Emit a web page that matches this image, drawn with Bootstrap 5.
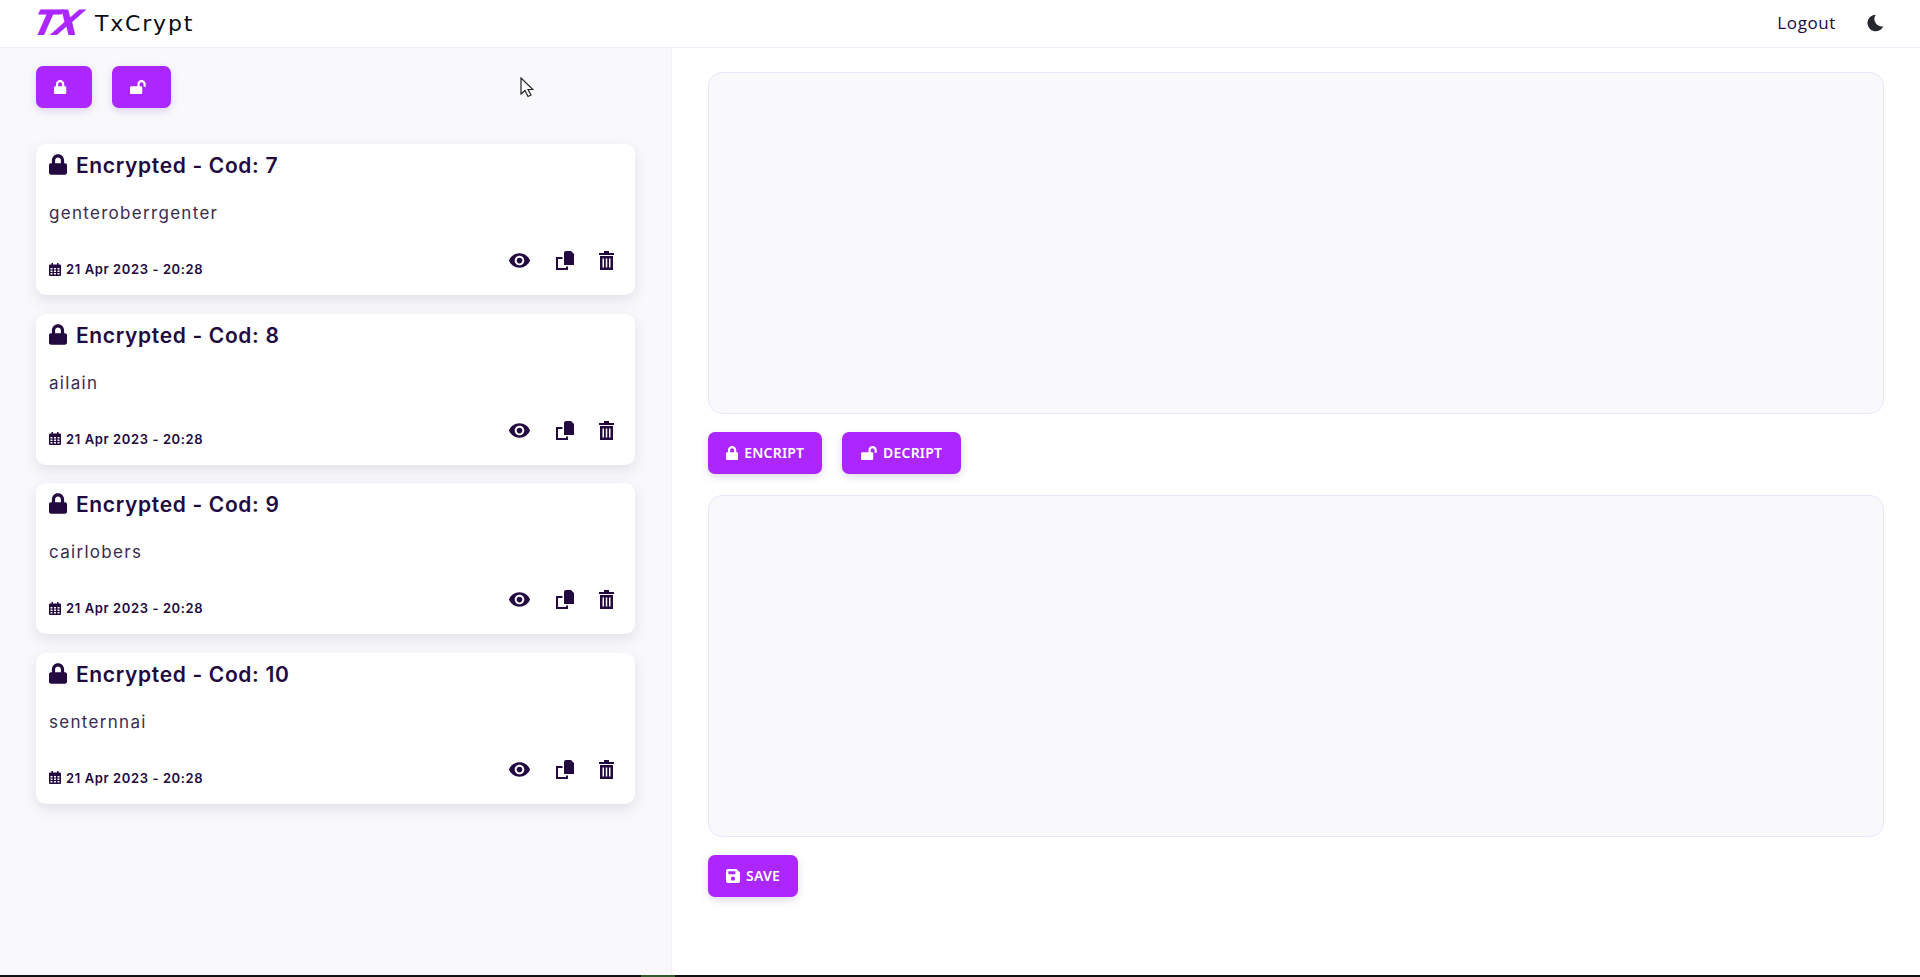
<!DOCTYPE html>
<html lang="en">
<head>
    <meta charset="UTF-8">
    <meta name="viewport" content="width=device-width, initial-scale=1.0">
    <title>TxCrypt</title>
    <link rel="stylesheet" href="https://cdn.jsdelivr.net/npm/bootstrap@5.3.0/dist/css/bootstrap.min.css">
    <style>
        body { height: 977px; overflow: hidden; background: #fff; color: #22093f; font-family: "Inter", "Liberation Sans", sans-serif; }
        .top-bar { height: 48px; padding: 0 36px; background: #fff; border-bottom: 1px solid #f5edfc; }
        .brand-mark { width: 49px; margin-left: -2px; color: #ab26ff; font: italic 700 35px/1 "DejaVu Sans", sans-serif; letter-spacing: -3.5px; transform: skewX(-14deg); }
        .brand-name { margin-left: 12px; color: #0b0b12; font: 400 22px/1 "DejaVu Sans", sans-serif; letter-spacing: 1.8px; }
        .logout-link { color: #22093f; font: 400 17px/1 "Open Sans", sans-serif; letter-spacing: .6px; margin: -3px 30px 0 0; text-decoration: none; }
        .moon-icon { width: 18px; height: 18px; fill: #26262e; margin-top: -2px; }
        .page-body { height: 927px; }
        .side-panel { width: 672px; padding: 18px 36px; background: #f9f9fc; border-right: 1px solid #f3f3f6; }
        .side-tools { margin-bottom: 36px; }
        .main-panel { padding: 24px 36px 0; }
        .btn-tx { display: inline-flex; align-items: center; justify-content: center; gap: 6px; height: 42px; padding: 0 18px; background: #ab26ff; color: #fff; border: 0; border-radius: 7px; font: 600 14px/1 "Noto Sans", sans-serif; letter-spacing: .2px; box-shadow: 0 3px 8px rgba(100, 60, 150, .2); }
        .btn-tx:hover { background: #9d1bf0; color: #fff; }
        .btn-tx svg { fill: #fff; height: 14px; width: auto; }
        .btn-square { width: 56px; padding: 0 7px 0 0; }
        .btn-wide { width: 59px; padding: 0 7px 0 0; }
        .btn-decript { width: 119px; padding: 0; }
        .entry-card { height: 151px; margin-bottom: 18.5px; padding: 8px 13px 0; border: 0; border-radius: 10px; box-shadow: 0 5px 14px rgba(60, 40, 90, .12); }
        .entry-title { margin: 0; font: 600 21px/28px "Inter", sans-serif; letter-spacing: .65px; color: #22093f; }
        .entry-title svg { width: 18px; height: 21px; margin: -5px 9px 0 0; fill: #22093f; vertical-align: middle; }
        .entry-text { margin: 22px 0 0; font: 400 17px/22px "Inter", sans-serif; letter-spacing: 1.3px; color: #3a2a50; }
        .entry-foot { margin-top: 21px; }
        .entry-date { font: 600 13px/1 "Inter", sans-serif; letter-spacing: .6px; margin-top: 18px; }
        .entry-date svg { width: 12px; height: 13px; fill: #22093f; margin: -2px 5px 0 0; vertical-align: middle; }
        .entry-actions { gap: 25px; margin-right: 8px; align-items: center; }
        .entry-actions svg { fill: #22093f; }
        .icon-eye { width: 23px; height: 23px; }
        .icon-copy { width: 18px; height: 19px; }
        .icon-trash { width: 15px; height: 19px; }
        .text-box { height: 342px; resize: none; background: #f9f9fb; border: 1px solid #efe4fa; border-radius: 14px; }
        .text-box:focus { background: #f9f9fb; border-color: #efe4fa; box-shadow: none; }
        .form-buttons { margin: 18px 0 21px; }
        .save-button { margin-top: 18px; }
        .cursor-mark { position: absolute; left: 520px; top: 77px; width: 14px; height: 21px; }
        .task-strip { position: absolute; left: 0; right: 0; bottom: 0; height: 2px; background: #111; }
        .task-item { position: absolute; left: 641px; width: 34px; height: 2px; background: #35592f; }
    </style>
</head>
<body class="position-relative">
    <!-- Top bar -->
    <nav class="top-bar d-flex align-items-center">
        <span class="brand-mark">TX</span>
        <span class="brand-name">TxCrypt</span>
        <div class="ms-auto d-flex align-items-center">
            <a class="logout-link" href="#">Logout</a>
            <svg class="moon-icon" viewBox="0 0 24 24"><path d="M13 1a11 11 0 1 0 10 15.5A10 10 0 0 1 13 1z"/></svg>
        </div>
    </nav>

    <div class="page-body d-flex">
        <!-- Saved items -->
        <div class="side-panel">
            <div class="side-tools d-flex gap-3">
                <button class="btn-tx btn-square"><svg viewBox="0 0 448 512"><path d="M400 224h-24v-72C376 68.2 307.8 0 224 0S72 68.2 72 152v72H48c-26.5 0-48 21.5-48 48v192c0 26.5 21.5 48 48 48h352c26.5 0 48-21.5 48-48V272c0-26.5-21.5-48-48-48zm-104 0H152v-72c0-39.7 32.3-72 72-72s72 32.3 72 72v72z"/></svg></button>
                <button class="btn-tx btn-wide ms-1"><svg viewBox="0 0 576 512"><path d="M423.5 0C339.5.3 272 69.5 272 153.5V224H48c-26.5 0-48 21.5-48 48v192c0 26.5 21.5 48 48 48h352c26.5 0 48-21.5 48-48V272c0-26.5-21.5-48-48-48h-48v-71.1c0-39.6 31.7-72.5 71.3-72.9 40-.4 72.7 32.1 72.7 72v80c0 13.3 10.7 24 24 24h32c13.3 0 24-10.7 24-24v-80C576 68 507.5-.3 423.5 0z"/></svg></button>
            </div>
            <div id="entryList"></div>
        </div>

        <!-- Encrypt form -->
        <div class="main-panel flex-grow-1">
            <textarea class="form-control text-box"></textarea>
            <div class="form-buttons d-flex gap-3">
                <button class="btn-tx"><svg viewBox="0 0 448 512"><path d="M400 224h-24v-72C376 68.2 307.8 0 224 0S72 68.2 72 152v72H48c-26.5 0-48 21.5-48 48v192c0 26.5 21.5 48 48 48h352c26.5 0 48-21.5 48-48V272c0-26.5-21.5-48-48-48zm-104 0H152v-72c0-39.7 32.3-72 72-72s72 32.3 72 72v72z"/></svg>ENCRIPT</button>
                <button class="btn-tx btn-decript ms-1"><svg viewBox="0 0 576 512"><path d="M423.5 0C339.5.3 272 69.5 272 153.5V224H48c-26.5 0-48 21.5-48 48v192c0 26.5 21.5 48 48 48h352c26.5 0 48-21.5 48-48V272c0-26.5-21.5-48-48-48h-48v-71.1c0-39.6 31.7-72.5 71.3-72.9 40-.4 72.7 32.1 72.7 72v80c0 13.3 10.7 24 24 24h32c13.3 0 24-10.7 24-24v-80C576 68 507.5-.3 423.5 0z"/></svg>DECRIPT</button>
            </div>
            <textarea class="form-control text-box"></textarea>
            <button class="btn-tx save-button"><svg viewBox="0 0 24 24"><path d="M3 0h15l6 6v15a3 3 0 0 1-3 3H3a3 3 0 0 1-3-3V3a3 3 0 0 1 3-3zm1 4v5h12V4H4zm8 9a3.5 3.5 0 1 0 0 7 3.5 3.5 0 0 0 0-7z"/></svg>SAVE</button>
        </div>
    </div>

    <svg class="cursor-mark" viewBox="0 0 14 21"><path d="M1 1v16l4-3.5 3 6 3-1.5-3-5.5h5z" fill="#fff" stroke="#222" stroke-width="1.2"/></svg>
    <div class="task-strip"><div class="task-item"></div></div>

    <script>
        const lockIcon = '<svg viewBox="0 0 448 512"><path d="M400 224h-24v-72C376 68.2 307.8 0 224 0S72 68.2 72 152v72H48c-26.5 0-48 21.5-48 48v192c0 26.5 21.5 48 48 48h352c26.5 0 48-21.5 48-48V272c0-26.5-21.5-48-48-48zm-104 0H152v-72c0-39.7 32.3-72 72-72s72 32.3 72 72v72z"/></svg>';
        const calIcon = '<svg viewBox="0 0 24 26"><path fill-rule="evenodd" d="M5 0h3v3h8V0h3v3h3a2 2 0 0 1 2 2v19a2 2 0 0 1-2 2H2a2 2 0 0 1-2-2V5a2 2 0 0 1 2-2h3zM3 10v3h4v-3zm7 0v3h4v-3zm7 0v3h4v-3zM3 15v3h4v-3zm7 0v3h4v-3zm7 0v3h4v-3zM3 20v3h4v-3zm7 0v3h4v-3zm7 0v3h4v-3z"/></svg>';
        const eyeIcon = '<svg class="icon-eye" viewBox="0 0 24 24"><path d="M12 4.5C7 4.5 2.73 7.61 1 12c1.73 4.39 6 7.5 11 7.5s9.27-3.11 11-7.5c-1.73-4.39-6-7.5-11-7.5zM12 17c-2.76 0-5-2.24-5-5s2.24-5 5-5 5 2.24 5 5-2.24 5-5 5zm0-8c-1.66 0-3 1.34-3 3s1.34 3 3 3 3-1.34 3-3-1.34-3-3-3z"/></svg>';
        const copyIcon = '<svg class="icon-copy" viewBox="0 0 18 19"><path d="M10 0h5l3 3v11H8V2a2 2 0 0 1 2-2z"/><path d="M0 6h6.5v2H2v9h8v-1.5h2V19H0z"/></svg>';
        const trashIcon = '<svg class="icon-trash" viewBox="0 0 15 19"><path fill-rule="evenodd" d="M0 2h5V0h5v2h5v2H0zM1 5h13v14H1zm2.5 2.5v9H5v-9zm3.25 0v9h1.5v-9zm3.25 0v9h1.5v-9z"/></svg>';

        const entries = [
            { cod: 7, text: "genteroberrgenter" },
            { cod: 8, text: "ailain" },
            { cod: 9, text: "cairlobers" },
            { cod: 10, text: "senternnai" }
        ];

        document.getElementById("entryList").innerHTML = entries.map(e => `
            <div class="card entry-card">
                <h5 class="entry-title">${lockIcon}Encrypted - Cod: ${e.cod}</h5>
                <p class="entry-text">${e.text}</p>
                <div class="entry-foot d-flex justify-content-between align-items-center">
                    <span class="entry-date">${calIcon}21 Apr 2023 - 20:28</span>
                    <span class="entry-actions d-flex">${eyeIcon}${copyIcon}${trashIcon}</span>
                </div>
            </div>`).join("");
    </script>
    <script src="https://cdn.jsdelivr.net/npm/bootstrap@5.3.0/dist/js/bootstrap.bundle.min.js"></script>
</body>
</html>
